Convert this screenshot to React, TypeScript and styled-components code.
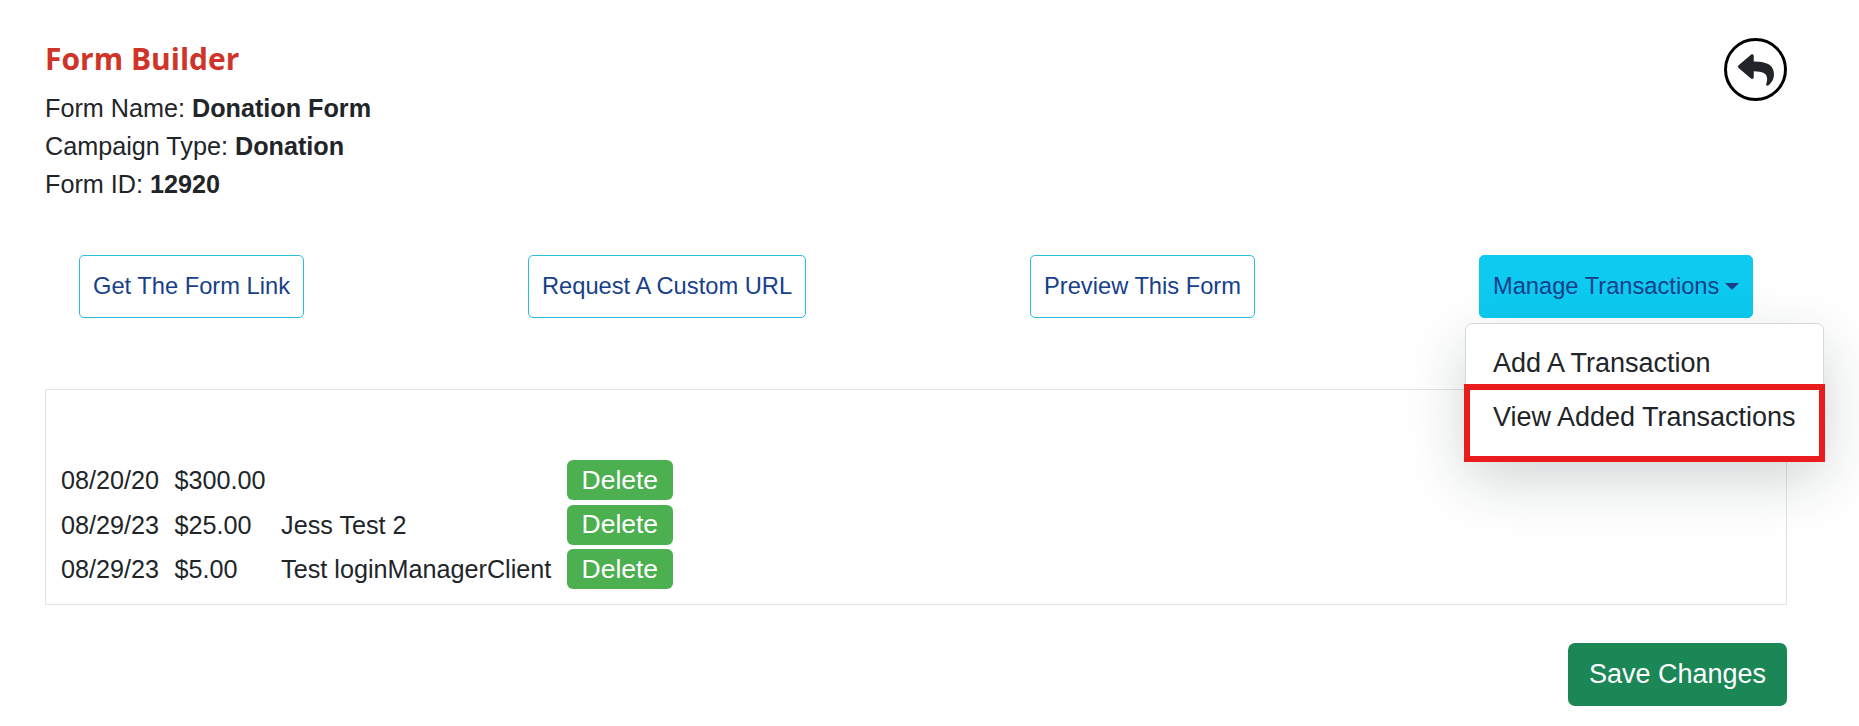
import * as React from "react";
import styled, { createGlobalStyle } from "styled-components";
import { FaReply } from "react-icons/fa";

const GlobalStyle = createGlobalStyle`
  html, body {
    margin: 0;
    padding: 0;
    background: #fff;
  }
  body {
    font-family: "Liberation Sans", Arial, sans-serif;
    font-size: 25.2px;
    line-height: 38px;
    color: #212529;
  }
  * {
    box-sizing: border-box;
  }
`;

const Page = styled.div`
  padding: 37px 72px 19px 45px;
`;

const Header = styled.div`
  display: flex;
  justify-content: space-between;
  align-items: flex-start;
`;

const Title = styled.h1`
  margin: 0 0 8px;
  font-family: "Open Sans", sans-serif;
  font-size: 30px;
  line-height: 44px;
  font-weight: 700;
  color: #cf3429;
`;

const BackButton = styled.a`
  display: flex;
  align-items: center;
  justify-content: center;
  width: 63px;
  height: 63px;
  margin-top: 1px;
  border: 3px solid #000;
  border-radius: 50%;
  color: #212529;
`;

const InfoLine = styled.div`
  height: 38px;
`;

const Actions = styled.div`
  display: flex;
  justify-content: space-between;
  padding: 0 34px;
  margin-top: 52px;
`;

const ActionButton = styled.button`
  height: 63px;
  padding: 0 13px;
  border: 1px solid #27bfdc;
  border-radius: 5px;
  background: #fff;
  color: #173f8a;
  font: 23.7px "Liberation Sans", Arial, sans-serif;
  white-space: nowrap;
`;

const DropdownWrap = styled.div`
  position: relative;
`;

const ManageButton = styled(ActionButton)`
  display: flex;
  align-items: center;
  border-color: #0dcaf0;
  background: #0dcaf0;
`;

const Caret = styled.span`
  width: 0;
  height: 0;
  margin-left: 5.6px;
  border-top: 7px solid #173f8a;
  border-left: 7px solid transparent;
  border-right: 7px solid transparent;
`;

const Menu = styled.div`
  position: absolute;
  z-index: 2;
  top: 68px;
  left: -14px;
  width: 359px;
  padding: 12px 0;
  background: #fff;
  border: 1px solid #d5d8db;
  border-radius: 7px;
  box-shadow: 0 22px 60px rgba(20, 40, 40, 0.2);
`;

const MenuItem = styled.div`
  height: 54px;
  padding: 0 27px;
  font-size: 27px;
  line-height: 54px;
  white-space: nowrap;
`;

const Highlight = styled.div`
  position: absolute;
  top: 60px;
  left: -2px;
  width: 361px;
  height: 78px;
  border: 6px solid #e81c1c;
`;

const Panel = styled.div`
  display: grid;
  grid-template-columns: repeat(3, max-content) 106px;
  column-gap: 15.5px;
  row-gap: 4.5px;
  align-items: center;
  margin-top: 71px;
  padding: 70px 15px 15px;
  border: 1px solid #e2e3e4;
`;

const DeleteButton = styled.button`
  height: 40px;
  padding: 0;
  border: none;
  border-radius: 6px;
  background: #4caf50;
  color: #fff;
  font: 26.5px "Liberation Sans", Arial, sans-serif;
`;

const Footer = styled.div`
  display: flex;
  justify-content: flex-end;
  margin-top: 38px;
`;

const SaveButton = styled.button`
  height: 63px;
  padding: 0 21px;
  border: none;
  border-radius: 7px;
  background: #1b8757;
  color: #fff;
  font: 27px "Liberation Sans", Arial, sans-serif;
`;

const transactions = [
  { date: "08/20/20", amount: "$300.00", name: "" },
  { date: "08/29/23", amount: "$25.00", name: "Jess Test 2" },
  { date: "08/29/23", amount: "$5.00", name: "Test loginManagerClient" },
];

export default function App() {
  return (
    <Page>
      <GlobalStyle />
      <Header>
        <div>
          <Title>Form Builder</Title>
          <InfoLine>
            Form Name: <b>Donation Form</b>
          </InfoLine>
          <InfoLine>
            Campaign Type: <b>Donation</b>
          </InfoLine>
          <InfoLine>
            Form ID: <b>12920</b>
          </InfoLine>
        </div>
        <BackButton>
          <FaReply size={36} />
        </BackButton>
      </Header>

      <Actions>
        <ActionButton>Get The Form Link</ActionButton>
        <ActionButton>Request A Custom URL</ActionButton>
        <ActionButton>Preview This Form</ActionButton>
        <DropdownWrap>
          <ManageButton>
            Manage Transactions
            <Caret />
          </ManageButton>
          <Menu>
            <MenuItem>Add A Transaction</MenuItem>
            <MenuItem>View Added Transactions</MenuItem>
            <Highlight />
          </Menu>
        </DropdownWrap>
      </Actions>

      <Panel>
        {transactions.map((t, i) => (
          <React.Fragment key={i}>
            <span>{t.date}</span>
            <span>{t.amount}</span>
            <span>{t.name}</span>
            <DeleteButton>Delete</DeleteButton>
          </React.Fragment>
        ))}
      </Panel>

      <Footer>
        <SaveButton>Save Changes</SaveButton>
      </Footer>
    </Page>
  );
}
